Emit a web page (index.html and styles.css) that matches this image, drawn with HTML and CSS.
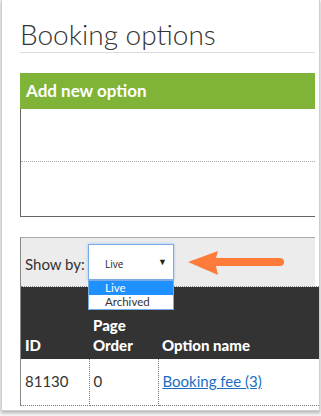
FILE: index.html
```html
<html lang="en">
<head>
  <meta charset="UTF-8" />
  <title>Booking options</title>
  <link rel="stylesheet" href="styles.css">
</head>
<body>
  <div class="frame">
    <h1 class="title">Booking options</h1>

    <section class="add-box">
      <div class="add-head">Add new option</div>
      <div class="add-body">
        <div class="add-row"></div>
        <div class="add-row"></div>
      </div>
    </section>

    <section class="list">
      <div class="filter">
        <span class="filter-label">Show by:</span>
        <div class="select-wrap">
          <div class="select">
            <span>Live</span>
            <span class="caret">&#9660;</span>
          </div>
          <ul class="options">
            <li class="selected">Live</li>
            <li>Archived</li>
          </ul>
        </div>
        <svg class="pointer" width="100" height="28" viewBox="0 0 100 28">
          <path d="M0 13 L30 2 L28 9 L92 9 A4 4 0 0 1 92 17 L28 17 L30 26 Z" fill="#ff7b3a" />
        </svg>
      </div>

      <table>
        <thead>
          <tr>
            <th class="col-id">ID</th>
            <th class="col-order">Page<br>Order</th>
            <th>Option name</th>
          </tr>
        </thead>
        <tbody>
          <tr>
            <td>81130</td>
            <td>0</td>
            <td><a href="#">Booking fee (3)</a></td>
          </tr>
        </tbody>
      </table>
    </section>
  </div>
</body>
</html>
```

FILE: styles.css
```css
* {
  margin: 0;
  padding: 0;
  box-sizing: border-box;
}

body {
  background: #f4f4f4;
  font-family: Lato, "Open Sans", sans-serif;
  color: #333;
}

.frame {
  margin-left: 1px;
  width: 319px;
  height: 411px;
  background: #fff;
  border: 1px solid #cfcfcf;
  border-top: none;
  box-shadow: 0 2px 3px rgba(0, 0, 0, 0.25);
  padding: 18px 4px 0 18px;
  overflow: hidden;
}

.title {
  font-weight: 300;
  font-size: 28px;
  line-height: 33px;
  color: #333;
  border-bottom: 1px solid #dcdcdc;
  padding-bottom: 1px;
  margin-bottom: 20px;
}

.add-head {
  background: #7fb438;
  color: #fff;
  font-weight: bold;
  font-size: 17px;
  height: 36px;
  line-height: 36px;
  padding-left: 6px;
}

.add-body {
  border-left: 1px solid #666;
  border-bottom: 1px solid #666;
  height: 108px;
}

.add-row {
  height: 53px;
}

.add-row:first-child {
  border-bottom: 1px dotted #aaa;
}

.list {
  margin-top: 20px;
  border-left: 1px solid #888;
}

.filter {
  background: #ececec;
  border-top: 1px solid #aaa;
  height: 49px;
  display: flex;
  align-items: center;
  padding-left: 4px;
}

.filter-label {
  font-size: 15px;
  width: 63px;
  padding-top: 4px;
}

.select-wrap {
  position: relative;
}

.select {
  width: 86px;
  height: 36px;
  border: 1px solid #79ace4;
  box-shadow: 0 0 3px #9cc6f2;
  background: #fff;
  display: flex;
  align-items: center;
  justify-content: space-between;
  padding: 3px 6px 0 16px;
  font-family: "Open Sans", sans-serif;
  font-size: 10px;
  color: #222;
}

.caret {
  font-size: 9px;
  margin-top: -4px;
}

.options {
  position: absolute;
  top: 36px;
  left: 0;
  width: 86px;
  list-style: none;
  background: #fff;
  border: 1px solid #79ace4;
  z-index: 2;
  font-size: 11.5px;
  color: #333;
}

.options li {
  height: 14px;
  line-height: 14px;
  padding-left: 16px;
}

.options li.selected {
  background: #1e90ff;
  color: #fff;
}

.pointer {
  margin-left: 14px;
  margin-top: 2px;
}

table {
  width: 300px;
  border-collapse: collapse;
  font-size: 15px;
}

thead tr {
  background: #333;
  color: #fff;
  border-top: 1px dotted #888;
}

th {
  text-align: left;
  font-weight: 900;
  vertical-align: bottom;
  height: 72px;
  padding: 0 4px 4px;
  line-height: 20px;
}

.col-id {
  width: 68px;
}

.col-order {
  width: 69px;
}

td {
  height: 47px;
  padding: 0 4px 2px;
  border-right: 1px dotted #777;
  border-bottom: 1px dotted #777;
}

td:last-child {
  border-right: none;
}

a {
  color: #1a6fc2;
}
```
